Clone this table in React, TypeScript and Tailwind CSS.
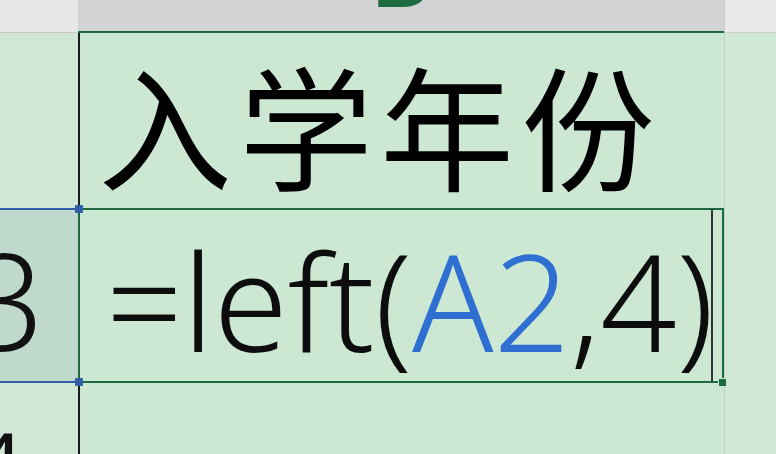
export default function App() {
  const cjk = { fontFamily: '"Noto Sans CJK SC", "Noto Sans", sans-serif' };
  const latin = { fontFamily: '"Noto Sans", "Noto Sans CJK SC", sans-serif' };

  return (
    <div className="w-[776px] h-[454px] overflow-hidden flex flex-col bg-[#cde8d2]" style={latin}>
      {/* column headers */}
      <div className="flex h-[33px] shrink-0">
        <div className="w-[78px] bg-[#e7e7e9] border-b border-[#c9c9cb]" />
        <div className="w-[646px] bg-[#d3d3d5] border-b-2 border-[#1d6a40] flex justify-center overflow-hidden">
          <span className="text-[92px] font-bold leading-none text-[#1f6b42] -mt-[74px]">B</span>
        </div>
        <div className="flex-1 bg-[#eaeaec] border-l border-[#d0d0d2] border-b border-[#c9c9cb]" />
      </div>

      {/* row 1 */}
      <div className="flex h-[175px] shrink-0">
        <div className="w-[78px] bg-[#cfe7d4]" />
        <div className="w-[646px] border-l-2 border-[#1b1b1b] flex items-center pl-[18px] pt-[4px]">
          <span className="text-[134px] tracking-[7px] leading-none text-black whitespace-nowrap" style={cjk}>入学年份</span>
        </div>
        <div className="flex-1 bg-[#d0eAd5] border-l border-[#bcd7c1]" />
      </div>

      {/* row 2 - active */}
      <div className="flex h-[175px] shrink-0">
        <div className="w-[78px] bg-[#bfd9cc] border-y-2 border-[#2f5ea6] flex items-center justify-end pr-[34px] overflow-hidden">
          <span className="text-[134px] font-light leading-none text-[#111] whitespace-nowrap mt-[6px]">3</span>
        </div>
        <div className="relative w-[646px] border-2 border-[#1d6a40] flex items-center pl-[26px] pt-[8px]">
          <span className="text-[134px] font-light leading-none text-[#0d0d0d] whitespace-nowrap">
            =left(<span className="text-[#2e6fd1]">A2</span>,4)
          </span>
          <div className="absolute right-[9px] top-0 bottom-0 w-[2px] bg-[#333]" />
          <div className="absolute -right-[5px] -bottom-[6px] w-[9px] h-[9px] bg-[#1e6b42] border border-[#cde8d2]" />
          <div className="absolute -left-[5px] -top-[5px] w-[8px] h-[8px] bg-[#2f5ea6] rounded-[1px]" />
          <div className="absolute -left-[5px] -bottom-[5px] w-[8px] h-[8px] bg-[#2f5ea6] rounded-[1px]" />
        </div>
        <div className="flex-1 bg-[#d0ead5] border-l border-[#bcd7c1]" />
      </div>

      {/* row 3 */}
      <div className="flex flex-1">
        <div className="w-[78px] bg-[#cfe7d4] flex justify-end pr-[48px] overflow-hidden">
          <span className="text-[134px] font-light leading-none text-[#111] whitespace-nowrap mt-[28px]">4</span>
        </div>
        <div className="w-[646px] border-l-2 border-[#1b1b1b]" />
        <div className="flex-1 bg-[#d0ead5] border-l border-[#bcd7c1]" />
      </div>
    </div>
  );
}
